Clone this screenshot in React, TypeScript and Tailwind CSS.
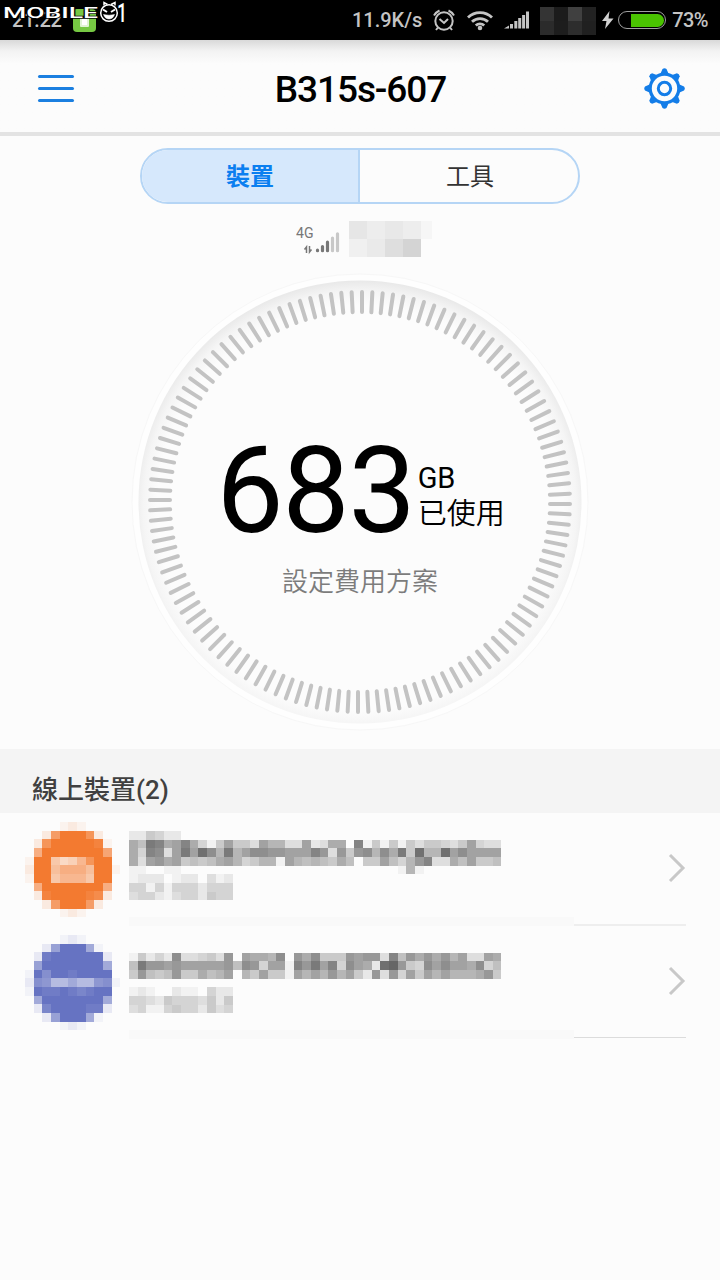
import { clsx } from 'clsx';

const CELL = 26 / 3;

const TICKS = Array.from({ length: 120 }, (_, i) => {
  const deg = i * 3;
  return deg - 0.85 * Math.sin((deg * 4 * Math.PI) / 180);
});

type Device = {
  id: string;
  color: string;
  avatar: string[];
  text: string[];
  last?: boolean;
};

// Each character is one cell, 0 (empty) to f (full)
const DEVICES: Device[] = [
  {
    id: 'orange',
    color: '#f37a30',
    avatar: [
      '00001210000',
      '002bfffc200',
      '02cfffffe10',
      '09fffffffa0',
      '1ff6458cff0',
      '2ff79997ff1',
      '1ff68886ff0',
      '09fffffff90',
      '02effffed20',
      '002bfffb200',
      '00001210000',
    ],
    text: [
      '225422',
      '86dc89c8415955397733923880c1515153554359433',
      '84cb39d9eb7d79bbaa999ca3a5ab7b8d5e77e9b9999',
      '839a89565689745771976765860559647ac33869556',
      '1100110000000000000000000000000171',
      '122201220312',
      '441414442444',
      '344213442544',
    ],
  },
  {
    id: 'blue',
    color: '#6673c2',
    avatar: [
      '00001210000',
      '002afff9100',
      '02effffff20',
      '0afffffff90',
      '1fcffeffff0',
      '2cb77977bc1',
      '1feefedeff0',
      '09fffffff90',
      '02dffffee20',
      '002afff9100',
      '00001210000',
    ],
    text: [
      '',
      '15242b33453a09887b0a8b555a9aa3c6a8a8a793398',
      '6daa9a99999a6ba4991cad9c4b982efa54b9b998b46',
      '5a656a55867907595519797a7952a3a4959797778a5',
      '',
      '121002110422',
      '443254443525',
      '341145442534',
    ],
    last: true,
  },
];

export default function App() {
  return (
    <div className="flex h-[1280px] w-[720px] flex-col overflow-hidden bg-[#fcfcfc] font-[Roboto,'Noto_Sans_CJK_TC',sans-serif] text-black">
      <StatusBar />

      {/* Header */}
      <header className="flex h-24 shrink-0 items-center justify-between border-b-4 border-[#e3e3e3] bg-linear-to-b from-[#d9d9d9] via-[#f3f3f3] via-12% to-[#fcfcfc] to-26% pr-[35px] pl-[38px]">
        <button className="flex w-9 flex-col gap-[9px] pt-1" aria-label="menu">
          <span className="h-[3px] rounded-full bg-[#1b7fe0]" />
          <span className="h-[3px] rounded-full bg-[#1b7fe0]" />
          <span className="h-[3px] rounded-full bg-[#1b7fe0]" />
        </button>
        <h1 className="pt-[6px] pl-[3px] text-[37px] leading-none font-medium tracking-[-1.1px]">B315s-607</h1>
        <GearIcon />
      </header>

      {/* Tabs */}
      <div className="mx-auto mt-3 flex h-14 w-[440px] shrink-0 overflow-hidden rounded-full border-2 border-[#b5d5f5] text-2xl">
        <button className="flex w-[218px] shrink-0 items-center justify-center border-r-2 border-[#b5d5f5] bg-[#d6e8fc] pt-0.5 font-bold text-[#0b7ff0]">
          裝置
        </button>
        <button className="flex flex-1 items-center justify-center pt-0.5 pl-0.5 text-[#333]">工具</button>
      </div>

      <NetworkInfo />
      <UsageDial />

      <h2 className="mt-[18px] flex h-16 shrink-0 items-center bg-[#f4f4f4] pt-[18px] pl-8 text-[26px] font-medium text-[#404040]">
        線上裝置(2)
      </h2>
      <ul>
        {DEVICES.map((device) => (
          <DeviceRow key={device.id} device={device} />
        ))}
      </ul>
    </div>
  );
}

const StatusBar = () => (
  <div className="relative flex h-10 shrink-0 items-center bg-black text-[20px] font-medium text-[#c4c4c4]">
    <span className="ml-3 w-[50px] tracking-[-0.2px]">21:22</span>
    <span className="ml-[11px] flex h-[23px] w-[23px] items-center justify-center rounded-[4px] bg-[#76c843]">
      <span className="mt-1 h-[10px] w-[9px] rounded-[1px] border-2 border-[#e0f4d4] bg-white" />
    </span>
    <span className="ml-auto">11.9K/s</span>
    <svg className="ml-[10px]" width="24" height="24" viewBox="0 0 24 24" fill="none" stroke="#c4c4c4" strokeWidth="2">
      <circle cx="12" cy="13" r="8.7" />
      <path d="M7.5 11l4.5 4 4-4M2 7.500A12 12 0 0 1 7.500 2.500M22 7.500A12 12 0 0 0 16.500 2.500M6 19.500L4 22M18 19.500L20 22" />
    </svg>
    <svg className="ml-[10px]" width="28" height="22" viewBox="0 0 28 22" fill="none" stroke="#c4c4c4" strokeWidth="2.800">
      <path d="M2 8.500a17 17 0 0 1 24 0M6 12.800a11.500 11.500 0 0 1 16 0M9.800 16.500a6 6 0 0 1 8.400 0" />
      <circle cx="14" cy="19" r="2.300" fill="#c4c4c4" stroke="none" />
    </svg>
    <svg className="ml-[10px]" width="26" height="18" viewBox="0 0 26 18" fill="#c4c4c4">
      <path d="M0 17.500L5 14.500v3zM6 13h3v4.500H6zM10.300 10h3v7.500h-3zM14.200 7h3v10.500h-3zM18.100 4h3v13.500h-3zM22 .500h3v17h-3z" />
    </svg>
    <div className="mt-px ml-[10px] grid h-7 w-14 grid-cols-4 grid-rows-2">
      {['#343434', '#1c1c1c', '#404040', '#222', '#2b2b2b', '#1d1d1d', '#2d2d2d', '#202020'].map((c, i) => (
        <span key={i} style={{ backgroundColor: c }} />
      ))}
    </div>
    <svg className="ml-[6px]" width="12" height="18" viewBox="0 0 12 18" fill="#d0d0d0">
      <path d="M7.500 0L0 10h4.500L3 18 11.500 7.500H6.500z" />
    </svg>
    <div className="ml-1 flex h-[18px] w-[48px] items-center rounded-full border-[1.500px] border-[#a0a0a0] p-px">
      <span className="ml-[11px] h-[13px] flex-1 rounded-r-full bg-[#4ac400]" />
    </div>
    <span className="mr-3 ml-[6px] tracking-[-0.6px]">73%</span>

    {/* Watermark, sits over the clock */}
    <svg className="absolute top-0 left-0" width="140" height="30" viewBox="0 0 140 30">
      <text
        x="3"
        y="17.500"
        fontSize="14"
        fontFamily="Roboto, sans-serif"
        fontWeight="500"
        fill="#fff"
        stroke="#000"
        strokeWidth="1.500"
        paintOrder="stroke"
        textLength="95"
        lengthAdjust="spacingAndGlyphs"
      >
        MOBILE
      </text>
      <g fill="none" stroke="#fff" strokeWidth="1.500">
        <circle cx="109" cy="13" r="8.300" fill="#000" />
        <path d="M104 5.500V2.500l3.500 2M111 4.500l4-2v3" />
        <path d="M103 9.500l4 2.500M115 9.500l-4 2.500" strokeWidth="2" />
        <path d="M103.500 14.500q5.500 1.500 11 0q-1.500 4.500-5.500 4.500t-5.500-4.500z" fill="#fff" strokeWidth=".500" />
      </g>
      <text x="117" y="21.500" fontSize="25" fontFamily="Roboto, sans-serif" fontWeight="500" fill="#fff" textLength="10" lengthAdjust="spacingAndGlyphs">
        1
      </text>
    </svg>
  </div>
);

const GearIcon = () => (
  <svg className="mt-[5px]" width="41" height="41" viewBox="-20.500 -20.500 41 41" fill="none" stroke="#147de8">
    {[0, 45, 90, 135, 180, 225, 270, 315].map((a) => (
      <path key={a} d="M-4 -15L-2 -19.500Q0 -21 2 -19.500L4 -15z" fill="#147de8" stroke="none" transform={`rotate(${a})`} />
    ))}
    <circle r="14.300" strokeWidth="3.200" />
    <circle r="6.200" strokeWidth="3" />
  </svg>
);

const NetworkInfo = () => (
  <div className="mt-[17px] ml-[296px] flex h-9 shrink-0 items-start">
    <svg width="45" height="34" viewBox="0 0 45 34">
      <text x="0" y="17" fontSize="14.500" fontFamily="Roboto, sans-serif" fill="#777" textLength="17.500" lengthAdjust="spacingAndGlyphs">
        4G
      </text>
      <g stroke="#777" strokeWidth="1.500" fill="none">
        <path d="M10.500 32v-6l-2 2.500M13.500 25v6l2-2.500" />
      </g>
      <g strokeWidth="3.200" strokeLinecap="round">
        <path d="M21.500 29.200v.500M26.500 25.500v4.200M31.500 21.200v8.500" stroke="#777" />
        <path d="M36.500 17v12.700M41.500 12.800v16.900" stroke="#c8c8c8" />
      </g>
    </svg>
    <div className="ml-2 grid h-9 w-[83px] grid-cols-[18px_18px_18px_18px_11px] grid-rows-2">
      {['#e6e6e6', '#ededed', '#e8e8e8', '#ededed', '#f6f6f6', '#f0f0f0', '#eaeaea', '#dedede', '#d4d4d4', '#fcfcfc'].map(
        (c, i) => (
          <span key={i} style={{ backgroundColor: c }} />
        ),
      )}
    </div>
  </div>
);

const UsageDial = () => (
  <div className="mx-auto mt-[14px] grid h-[460px] w-[460px] shrink-0">
    <svg className="col-start-1 row-start-1" width="460" height="460" viewBox="-230 -231 460 460">
      <defs>
        <radialGradient id="rim" gradientUnits="userSpaceOnUse" cx="0" cy="6" r="228">
          <stop offset="0.890" stopColor="#fcfcfc" />
          <stop offset="0.950" stopColor="#f5f5f5" />
          <stop offset="1" stopColor="#e8e8e8" />
        </radialGradient>
      </defs>
      <circle r="228" fill="#fefefe" stroke="#f7f7f7" />
      <circle r="221.500" fill="url(#rim)" />
      <g stroke="#c3c3c3" strokeWidth="4" strokeLinecap="round">
        {TICKS.map((deg) => (
          <line key={deg} x1="2" x2="2" y1="-210" y2="-190" transform={`rotate(${deg})`} />
        ))}
      </g>
    </svg>
    <div className="col-start-1 row-start-1 flex flex-col items-center pt-[165px]">
      <div className="flex items-start pl-px">
        <span className="text-[120px] leading-[110px] tracking-[-1.2px]">683</span>
        <div className="flex flex-col pt-[25px] pl-[3px] text-[29px] leading-[35px]">
          <span className="tracking-[-0.3px]">GB</span>
          <span className="pt-px font-[350]">已使用</span>
        </div>
      </div>
      <button className="mt-[17px] text-[26px] font-[350] text-[#7c7c7c]">設定費用方案</button>
    </div>
  </div>
);

const DeviceRow = ({ device }: { device: Device }) => (
  <li className="flex h-[113px] items-start pt-[9px] pl-[25px]">
    <Mosaic rows={device.avatar} color={device.color} cols={13} />
    <div className="-ml-[9px] pt-[9px]">
      <Mosaic rows={device.text} cols={43} />
      <div className="mt-[17px] h-[9px] w-[445px] bg-[#f9f9f9]" />
    </div>
    <div className="flex h-full flex-1 flex-col items-end">
      <svg className="mt-[31px]" width="20" height="30" viewBox="0 0 20 30" fill="none" stroke="#c8c8c8" strokeWidth="3">
        <path d="M4 2L17 15 4 28" />
      </svg>
    </div>
    <div className="-ml-[112px] mr-[34px] flex h-full w-[112px] flex-col justify-end">
      <div className={clsx('w-full', device.last ? 'mb-px h-px bg-[#dcdcdc]' : 'h-0.5 bg-[#eee]')} />
    </div>
  </li>
);

const Mosaic = ({ rows, cols, color }: { rows: string[]; cols: number; color?: string }) => (
  <svg width={cols * CELL} height={rows.length * CELL} className="shrink-0" shapeRendering="crispEdges">
    {rows.map((row, y) =>
      [...row].map((ch, x) => {
        const level = parseInt(ch, 16);
        if (!level) return null;
        const gray = 252 - level * 10;
        return (
          <rect
            key={`${x}-${y}`}
            x={x * CELL}
            y={y * CELL}
            width={CELL}
            height={CELL}
            fill={color ?? `rgb(${gray},${gray},${gray})`}
            fillOpacity={color ? level / 15 : 1}
          />
        );
      }),
    )}
  </svg>
);
